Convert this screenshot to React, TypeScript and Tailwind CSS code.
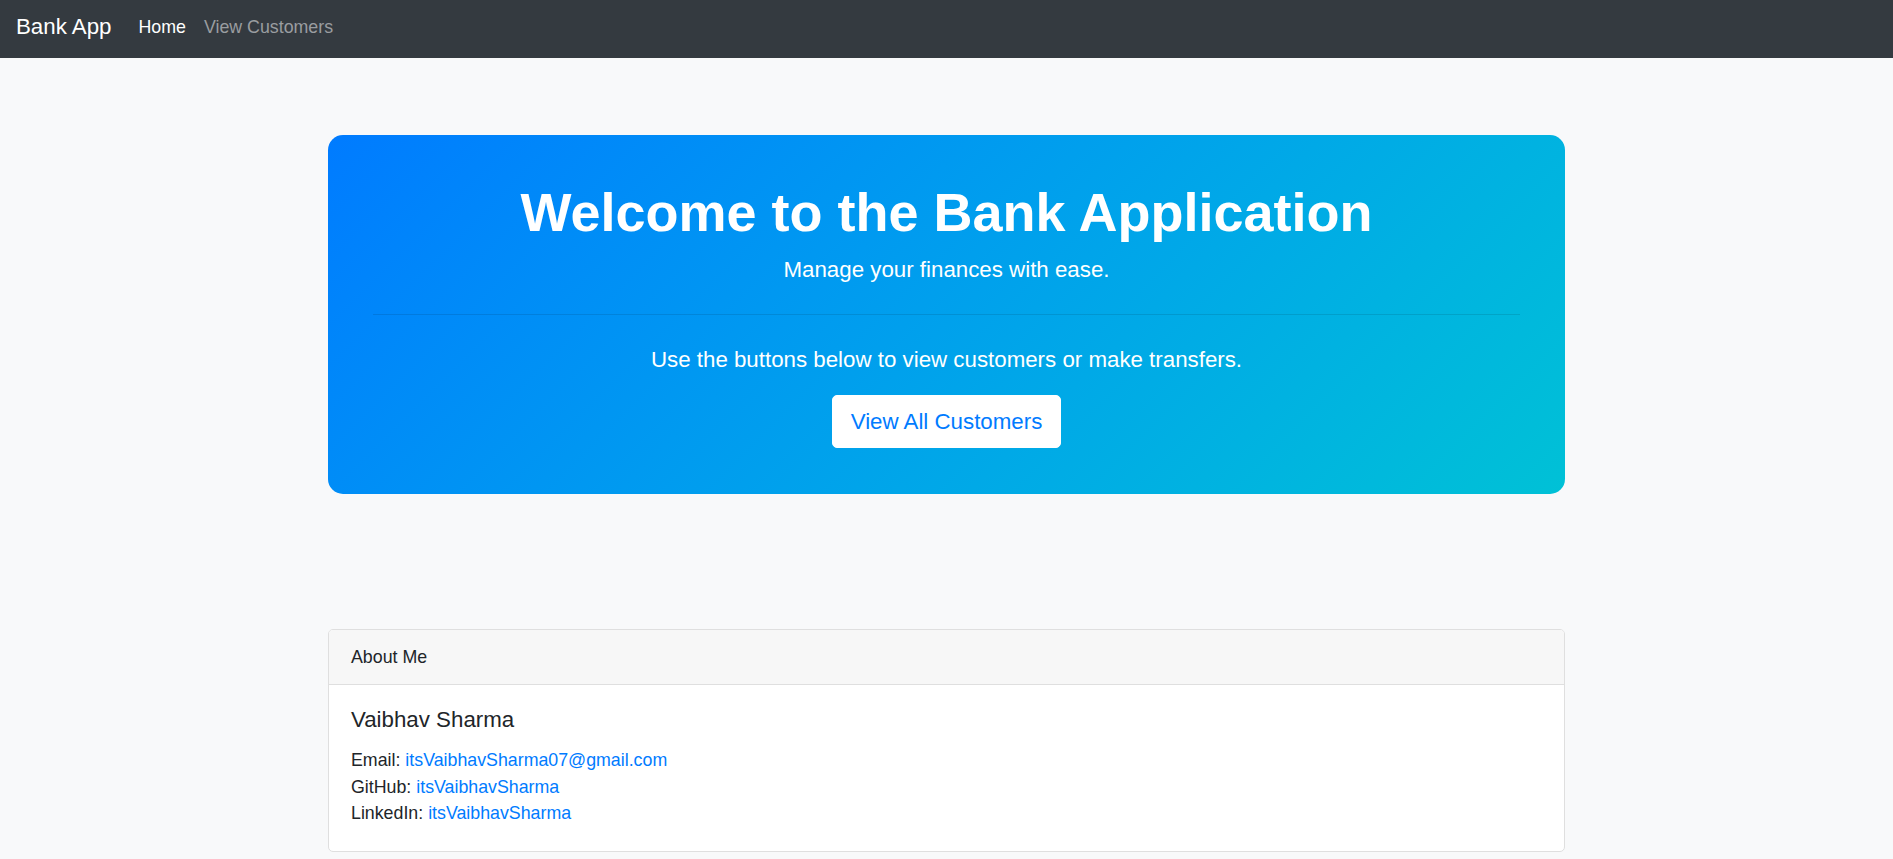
const links = [
  { label: "Email", text: "itsVaibhavSharma07@gmail.com" },
  { label: "GitHub", text: "itsVaibhavSharma" },
  { label: "LinkedIn", text: "itsVaibhavSharma" },
];

const Navbar = () => {
  return (
    <nav className="flex h-[58px] items-center bg-[#343a40] px-4 pb-[5px]">
      <a className="mr-[27px] text-[22.3px] leading-[33px] text-white">Bank App</a>
      <div className="flex items-center gap-[18px] text-[17.8px] leading-[26px]">
        <a className="text-white">Home</a>
        <a className="text-[#9a9da0]">View Customers</a>
      </div>
    </nav>
  );
};

const Hero = () => {
  return (
    <div className="rounded-[15px] bg-linear-135 from-[#007bff] to-[#00c1d6] px-[45px] pt-[45px] pb-[46px] text-center text-white">
      <h1 className="mb-[8px] text-[54px] leading-[65px] font-bold">Welcome to the Bank Application</h1>
      <p className="text-[22.3px] leading-[33px]">Manage your finances with ease.</p>
      <hr className="my-[28px] border-t border-[rgba(0,0,0,0.1)]" />
      <p className="mb-[19px] text-[22.3px] leading-[33px]">
        Use the buttons below to view customers or make transfers.
      </p>
      <a className="inline-block rounded-[5px] border border-white bg-white px-[18px] py-[8.8px] text-[22.3px] leading-[33px] text-[#007bff]">
        View All Customers
      </a>
    </div>
  );
};

const AboutMe = () => {
  return (
    <div className="overflow-hidden rounded-[5px] border border-[#dfdfdf] bg-white text-[#212529]">
      <div className="border-b border-[#dfdfdf] bg-[#f7f7f7] px-[22px] py-[14px] text-[17.8px] leading-[26.4px]">
        About Me
      </div>
      <div className="px-[22px] pt-[22px] pb-[24px]">
        <h5 className="mb-[14px] text-[22.3px] leading-[26.4px]">Vaibhav Sharma</h5>
        <div className="text-[17.8px] leading-[26.4px]">
          {links.map((l) => (
            <p key={l.label}>
              {l.label}: <a className="text-[#007bff]">{l.text}</a>
            </p>
          ))}
        </div>
      </div>
    </div>
  );
};

export default function App() {
  return (
    <div className="min-h-screen bg-[#f8f9fa] font-['Liberation_Sans',Arial,sans-serif]">
      <Navbar />
      <div className="mx-auto w-[1237px] pt-[77px] pb-10">
        <Hero />
        <div className="mt-[135px]">
          <AboutMe />
        </div>
      </div>
    </div>
  );
}
